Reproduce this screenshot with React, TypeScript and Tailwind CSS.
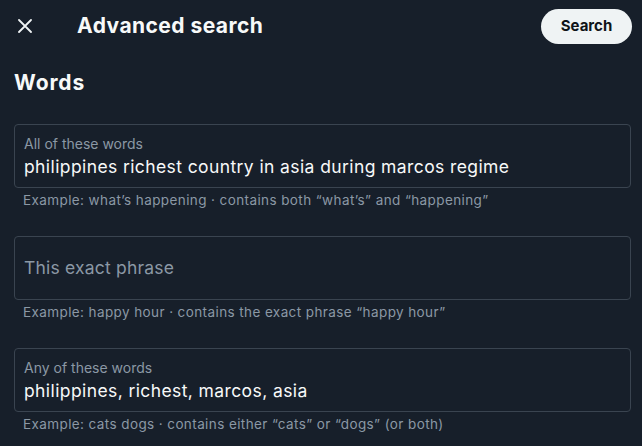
import { FC } from 'react';

type FieldProps = {
	label: string;
	value?: string;
	hint: string;
};

const Field: FC<FieldProps> = ({ label, value, hint }) => (
	<div className="mb-[28px]">
		<div className="h-[64px] rounded-[4px] border border-[#3a4450] px-[9px] flex flex-col justify-center">
			{value ? (
				<>
					<span className="text-[14px] leading-[16px] text-[#8b98a5] mt-[2px]">{label}</span>
					<span className="text-[17.5px] leading-[24px] tracking-[0.4px] text-[#f7f9f9] mt-[3px]">{value}</span>
				</>
			) : (
				<span className="text-[17.5px] leading-[24px] tracking-[0.2px] text-[#8b98a5]">{label}</span>
			)}
		</div>
		<p className="mt-[4px] px-[9px] text-[13.5px] leading-[16px] tracking-[0.4px] text-[#8b98a5]">{hint}</p>
	</div>
);

export default function App() {
	return (
		<div
			className="w-[642px] h-[446px] overflow-hidden bg-[#171f2a] text-[#f7f9f9]"
			style={{ fontFamily: 'Inter, "Liberation Sans", sans-serif' }}
		>
			<header className="h-[52px] flex items-center pl-[18px] pr-[10px]">
				<button className="w-[14px] h-[14px] flex items-center justify-center text-[#eff3f4]">
					<svg viewBox="0 0 14 14" className="w-[14px] h-[14px]" fill="none" stroke="currentColor" strokeWidth="1.8" strokeLinecap="round">
						<path d="M1 1 L13 13 M13 1 L1 13" />
					</svg>
				</button>
				<h1 className="ml-[45px] text-[21px] font-bold leading-[24px] tracking-[0.45px]">Advanced search</h1>
				<button className="ml-auto h-[35px] w-[91px] rounded-full bg-[#eff3f4] text-[#0f1419] text-[15px] font-bold">
					Search
				</button>
			</header>
			<div className="pl-[14px] pr-[11px]">
				<h2 className="mt-[18px] text-[21px] font-bold leading-[26px] tracking-[0.9px]">Words</h2>
				<div className="mt-[28px]">
					<Field
						label="All of these words"
						value="philippines richest country in asia during marcos regime"
						hint="Example: what’s happening · contains both “what’s” and “happening”"
					/>
					<Field
						label="This exact phrase"
						hint="Example: happy hour · contains the exact phrase “happy hour”"
					/>
					<Field
						label="Any of these words"
						value="philippines, richest, marcos, asia"
						hint="Example: cats dogs · contains either “cats” or “dogs” (or both)"
					/>
				</div>
			</div>
		</div>
	);
}
